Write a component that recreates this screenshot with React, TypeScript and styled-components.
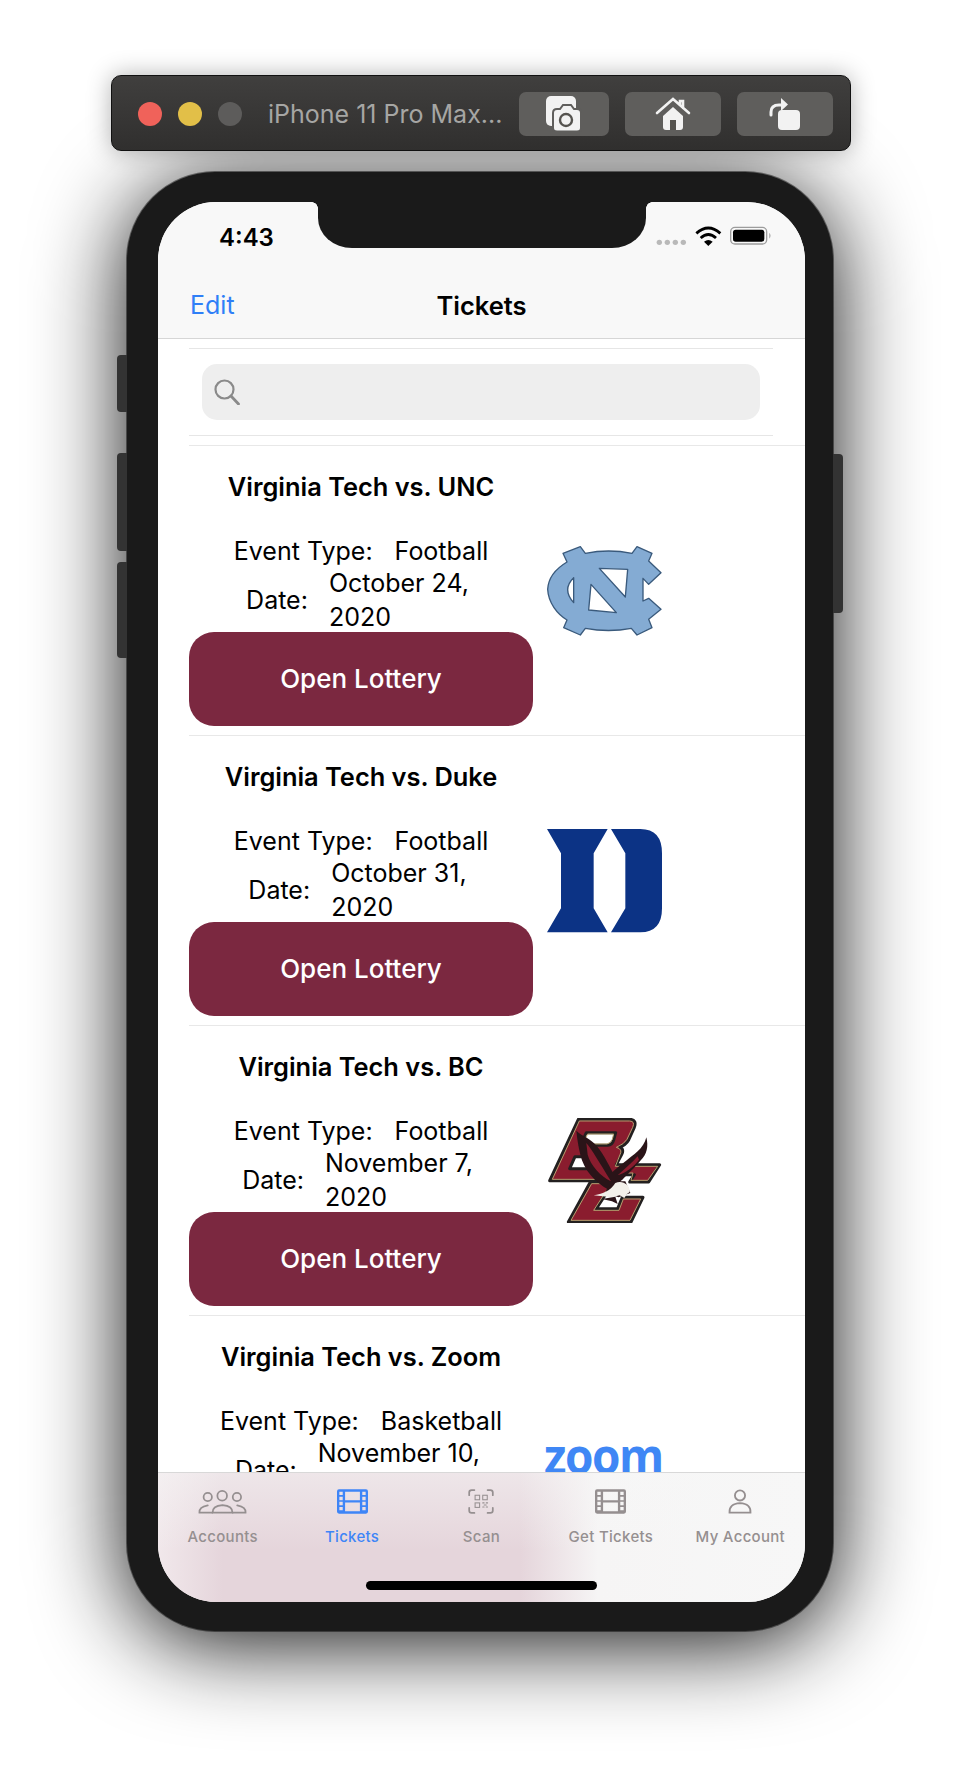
import styled, { createGlobalStyle } from "styled-components";

const GlobalStyle = createGlobalStyle`
  html, body {
    margin: 0;
    padding: 0;
    background: #fff;
    font-family: Inter, "Liberation Sans", sans-serif;
  }
`;

const events = [
  { title: "Virginia Tech vs. UNC", type: "Football", date: ["October 24,", "2020"], logo: "unc" },
  { title: "Virginia Tech vs. Duke", type: "Football", date: ["October 31,", "2020"], logo: "duke" },
  { title: "Virginia Tech vs. BC", type: "Football", date: ["November 7,", "2020"], logo: "bc" },
  { title: "Virginia Tech vs. Zoom", type: "Basketball", date: ["November 10,", "2020"], logo: "zoom" },
];

const filmPath = () => {
  let d = "M6 0H86Q92 0 92 6V66Q92 72 86 72H6Q0 72 0 66V6Q0 0 6 0Z";
  [7, 22, 37, 52].forEach((y) => {
    d += `M7 ${y}h10v10h-10zM75 ${y}h10v10h-10z`;
  });
  d += "M24 7h44v25h-44zM24 39h44v26h-44z";
  return d;
};

const FilmIcon = () => (
  <svg width="31" height="25" viewBox="0 0 92 72">
    <path d={filmPath()} fill="currentColor" fillRule="evenodd" />
  </svg>
);

const AccountsIcon = () => (
  <svg width="51" height="25" viewBox="20 22 156 78" fill="none" stroke="currentColor" strokeWidth="5.5" strokeLinecap="round">
    <circle cx="52" cy="47" r="13" />
    <circle cx="97" cy="43" r="15" />
    <circle cx="143" cy="47" r="13" />
    <path d="M67 96H129Q130 74 98 72Q66 74 67 96Z" />
    <path d="M66 96H26Q24 78 52 73" />
    <path d="M130 96H170Q172 78 144 73" />
  </svg>
);

const ScanIcon = () => (
  <svg width="26" height="25" viewBox="26 26 74 72" fill="none" stroke="currentColor" strokeWidth="5" strokeLinecap="round">
    <path d="M29 44V36Q29 29 36 29H44M82 29H90Q97 29 97 36V44M29 80V88Q29 95 36 95H44M82 95H90Q97 95 97 88V80" />
    <g strokeWidth="3">
      <rect x="46" y="44" width="13" height="13" />
      <rect x="68" y="44" width="13" height="13" />
      <rect x="46" y="66" width="13" height="13" />
      <path d="M68 66h4M78 66h4M72 72h6M68 78h4M78 78h4" />
    </g>
  </svg>
);

const AccountIcon = () => (
  <svg width="24" height="25" viewBox="0 0 70 74" fill="none" stroke="currentColor" strokeWidth="5.5">
    <circle cx="35" cy="19" r="15" />
    <path d="M4 70H66Q68 44 35 42Q2 44 4 70Z" />
  </svg>
);

const SearchIcon = () => (
  <svg width="26" height="26" viewBox="0 0 26 26" fill="none" stroke="#8a8a8a" strokeWidth="2.2" strokeLinecap="round">
    <circle cx="10.5" cy="10.5" r="9" />
    <path d="M17 17L24.5 25" strokeWidth="2.8" />
  </svg>
);

const StatusIcons = () => (
  <svg width="130" height="35" viewBox="0 0 390 105">
    <g fill="#b9b9b9">
      <circle cx="28" cy="67" r="8" />
      <circle cx="52" cy="67" r="8" />
      <circle cx="76" cy="67" r="8" />
      <circle cx="100" cy="67" r="8" />
    </g>
    <g fill="none" stroke="#000" strokeWidth="8.5">
      <path d="M139 40Q175 8 211 40" />
      <path d="M152 54Q175 33 198 54" />
    </g>
    <path d="M162 65Q175 55 188 65L175 78Z" fill="#000" />
    <rect x="242" y="22" width="108" height="50" rx="13" fill="none" stroke="#9c9c9c" strokeWidth="4" />
    <rect x="249" y="29" width="94" height="36" rx="8" fill="#000" />
    <path d="M358 38Q365 47 358 56Z" fill="#9c9c9c" />
  </svg>
);

const CameraIcon = () => (
  <svg width="36" height="36" viewBox="0 0 36 36">
    <rect x="0" y="0" width="30" height="30" rx="5" fill="#f2f2f2" />
    <path
      d="M7 17Q7 13 11 13H14L17 9H25L28 13H31Q35 13 35 17V32Q35 35.5 31 35.5H11Q7 35.5 7 32Z"
      fill="#f2f2f2"
      stroke="#5f5e5c"
      strokeWidth="2"
    />
    <circle cx="20" cy="24" r="6" fill="none" stroke="#55534f" strokeWidth="2.4" />
  </svg>
);

const HomeIcon = () => (
  <svg width="36" height="34" viewBox="0 0 36 34">
    <path d="M2 16L18 2L34 16M25 8V4H28V11" fill="none" stroke="#f2f2f2" strokeWidth="2.6" strokeLinecap="round" />
    <path d="M8 19L18 10L28 19V30Q28 33 25 33H11Q8 33 8 30Z" fill="#f2f2f2" />
    <rect x="15" y="23" width="6" height="10" fill="#55534f" />
  </svg>
);

const RotateIcon = () => (
  <svg width="32" height="34" viewBox="0 0 32 34">
    <rect x="9" y="13" width="22" height="20" rx="4" fill="#f2f2f2" />
    <path d="M2 18V15Q2 8 10 8H13" fill="none" stroke="#f2f2f2" strokeWidth="3" strokeLinecap="round" />
    <path d="M12 1L19 7.500L12 14Z" fill="#f2f2f2" />
  </svg>
);

const UncLogo = () => (
  <svg viewBox="0 0 345 270">
    <path
      fillRule="evenodd"
      fill="#84abd3"
      stroke="#3a5a7c"
      strokeWidth="4"
      strokeLinejoin="round"
      d="M2 130C4 90 30 66 60 48L48 22L100 2L115 22Q185 8 255 22L270 2L315 22L305 45L342 80L305 115L288 97V165L305 157L342 190L305 220L315 245L270 267L253 247Q185 260 115 247L100 267L50 245L60 222C30 204 4 170 2 130ZM80 95Q44 130 80 170ZM157 67L242 70L235 153ZM132 115L208 200L125 192Z"
    />
  </svg>
);

const DukeLogo = () => (
  <svg viewBox="0 2 345 312">
    <path
      fill="#0c3385"
      d="M0 2H182L140 75V240L182 312H0L42 240V75ZM192 2H280Q345 2 345 75V240Q345 312 280 312H192L235 240V75Z"
    />
  </svg>
);

const BcLogo = () => (
  <svg viewBox="0 0 345 316">
    <g stroke="#232020" strokeWidth="9" strokeLinejoin="round">
      <path
        fill="#8a1c2e"
        d="M94 4H250Q270 6 262 28L245 66Q236 82 218 86Q232 94 224 110L208 140H338L305 192H248L262 170H200L190 188H8ZM118 44L100 82H182Q196 80 200 66L206 44ZM84 116L68 152H140L160 116Z"
        fillRule="evenodd"
      />
      <path fill="#8a1c2e" d="M130 192H200L148 272H212L226 238H288L252 312H64Z" />
    </g>
    <g stroke="#b5a06f" strokeWidth="3" fill="none" strokeLinejoin="round">
      <path d="M97 9H248Q265 10 257 28L240 64Q232 78 208 88Q228 94 219 110L205 145H332L302 187H252L258 165H197L187 184H16Z" />
      <path d="M122 48L106 78H180Q190 76 196 64L200 48ZM134 197H192L140 277H216L229 243H281L249 307H72Z" />
    </g>
    <path
      fill="#2a1418"
      d="M88 38C105 55 130 60 150 85C172 112 190 150 205 178L212 200L186 215C145 195 110 155 100 110C94 85 90 60 88 38ZM298 58C305 85 300 110 280 128C262 150 240 170 226 185L200 205L185 175C205 150 250 120 272 100C285 88 294 75 298 58ZM186 190H235L250 225L215 238L175 225Z"
    />
    <path
      fill="#8a1c2e"
      d="M118 75C135 95 155 130 192 190C160 175 130 140 122 110ZM272 115C255 135 235 150 212 172C235 165 262 145 276 125Z"
    />
    <path fill="#f3f0ea" d="M205 195C225 185 250 200 248 222L240 228L232 240L218 232L195 238L140 232C165 228 190 220 205 195Z" />
    <path fill="#2a1418" d="M165 243L205 236L212 258L195 250Z" />
  </svg>
);

const renderLogo = (logo: string) => {
  if (logo === "unc") return <UncLogo />;
  if (logo === "duke") return <DukeLogo />;
  if (logo === "bc") return <BcLogo />;
  return <ZoomMark>zoom</ZoomMark>;
};

export default function App() {
  return (
    <Page>
      <GlobalStyle />
      <Toolbar>
        <Light $color="#f0625a" />
        <Light $color="#e2bf48" />
        <Light $color="#5d5c5b" />
        <DeviceName>iPhone 11 Pro Max...</DeviceName>
        <ToolButtons>
          <ToolButton $width={90}>
            <CameraIcon />
          </ToolButton>
          <ToolButton $width={96}>
            <HomeIcon />
          </ToolButton>
          <ToolButton $width={96}>
            <RotateIcon />
          </ToolButton>
        </ToolButtons>
      </Toolbar>
      <Phone>
        <SideButton $side="left" $top={183} $height={57} />
        <SideButton $side="left" $top={281} $height={98} />
        <SideButton $side="left" $top={390} $height={96} />
        <SideButton $side="right" $top={282} $height={159} />
        <Screen>
          <Notch />
          <StatusBar>
            <Clock>4:43</Clock>
            <StatusIcons />
          </StatusBar>
          <NavBar>
            <EditLink>Edit</EditLink>
            <NavTitle>Tickets</NavTitle>
          </NavBar>
          <List>
            <SearchSection>
              <SearchField>
                <SearchIcon />
              </SearchField>
            </SearchSection>
            {events.map((ev) => (
              <EventRow key={ev.title}>
                <EventInfo>
                  <EventTitle>{ev.title}</EventTitle>
                  <TypeLine>
                    <span>Event Type:</span>
                    <span>{ev.type}</span>
                  </TypeLine>
                  <DateLine>
                    <span>Date:</span>
                    <DateValue>
                      {ev.date.map((line) => (
                        <div key={line}>{line}</div>
                      ))}
                    </DateValue>
                  </DateLine>
                  <LotteryButton>Open Lottery</LotteryButton>
                </EventInfo>
                <LogoSlot>{renderLogo(ev.logo)}</LogoSlot>
              </EventRow>
            ))}
          </List>
          <TabBar>
            <Tabs>
              <Tab>
                <TabIcon><AccountsIcon /></TabIcon>
                Accounts
              </Tab>
              <Tab $active>
                <TabIcon><FilmIcon /></TabIcon>
                Tickets
              </Tab>
              <Tab>
                <TabIcon><ScanIcon /></TabIcon>
                Scan
              </Tab>
              <Tab>
                <TabIcon><FilmIcon /></TabIcon>
                Get Tickets
              </Tab>
              <Tab>
                <TabIcon><AccountIcon /></TabIcon>
                My Account
              </Tab>
            </Tabs>
            <HomeIndicator />
          </TabBar>
        </Screen>
      </Phone>
    </Page>
  );
}

const Page = styled.div`
  width: 962px;
  height: 1780px;
  overflow: hidden;
  padding-top: 75px;
  box-sizing: border-box;
  display: flex;
  flex-direction: column;
  align-items: center;
  gap: 21px;
`;

const Toolbar = styled.div`
  position: relative;
  z-index: 1;
  width: 740px;
  height: 76px;
  box-sizing: border-box;
  padding: 2px 17px 0 26px;
  display: flex;
  align-items: center;
  gap: 16px;
  background: linear-gradient(#403f3e, #302f2e);
  border: 1px solid #111;
  border-radius: 10px;
  box-shadow: 0 0 24px rgba(0, 0, 0, 0.3);
`;

const Light = styled.div<{ $color: string }>`
  width: 24px;
  height: 24px;
  border-radius: 50%;
  background: ${(p) => p.$color};
`;

const DeviceName = styled.div`
  margin-left: 10px;
  font-size: 25px;
  color: #a6a6a4;
  white-space: nowrap;
`;

const ToolButtons = styled.div`
  margin-left: auto;
  display: flex;
  gap: 16px;
`;

const ToolButton = styled.div<{ $width: number }>`
  width: ${(p) => p.$width}px;
  height: 44px;
  display: flex;
  align-items: center;
  justify-content: center;
  background: #5f5e5c;
  border-radius: 7px;
`;

const Phone = styled.div`
  position: relative;
  width: 706px;
  height: 1459px;
  margin-right: 2px;
  box-sizing: border-box;
  padding: 30px 28px 29px 31px;
  background: #1a1a1a;
  border-radius: 88px;
  box-shadow: 0 12px 90px rgba(0, 0, 0, 0.95), 0 0 0 1px rgba(90, 90, 90, 0.7);
`;

const SideButton = styled.div<{ $side: "left" | "right"; $top: number; $height: number }>`
  position: absolute;
  ${(p) => p.$side}: -10px;
  top: ${(p) => p.$top}px;
  width: 10px;
  height: ${(p) => p.$height}px;
  background: #333;
  border-radius: ${(p) => (p.$side === "left" ? "4px 0 0 4px" : "0 4px 4px 0")};
`;

const Screen = styled.div`
  position: relative;
  height: 1400px;
  display: flex;
  flex-direction: column;
  overflow: hidden;
  background: #fff;
  border-radius: 58px;
`;

const Notch = styled.div`
  position: absolute;
  top: 0;
  left: 160px;
  width: 328px;
  height: 46px;
  background: #1a1a1a;
  border-radius: 0 0 34px 34px / 0 0 30px 30px;
  z-index: 2;
  &::before,
  &::after {
    content: "";
    position: absolute;
    top: 0;
    width: 6px;
    height: 6px;
  }
  &::before {
    left: -6px;
    background: radial-gradient(circle at 0 100%, transparent 5.5px, #1a1a1a 6px);
  }
  &::after {
    right: -6px;
    background: radial-gradient(circle at 100% 100%, transparent 5.5px, #1a1a1a 6px);
  }
`;

const StatusBar = styled.div`
  height: 70px;
  flex: none;
  box-sizing: border-box;
  padding: 0 25px 0 61px;
  display: flex;
  align-items: center;
  justify-content: space-between;
  background: #f8f8f8;
`;

const Clock = styled.div`
  font-size: 24px;
  font-weight: 600;
  color: #000;
`;

const NavBar = styled.div`
  position: relative;
  height: 67px;
  flex: none;
  box-sizing: border-box;
  display: flex;
  align-items: center;
  justify-content: center;
  background: #f8f8f8;
  border-bottom: 1px solid #d6d6d6;
`;

const EditLink = styled.div`
  position: absolute;
  left: 32px;
  font-size: 25px;
  color: #2f7ff7;
`;

const NavTitle = styled.div`
  font-size: 25.5px;
  font-weight: 600;
  color: #000;
`;

const List = styled.div`
  flex: 1;
  min-height: 0;
  overflow: hidden;
  padding-top: 9px;
`;

const SearchSection = styled.div`
  margin: 0 32px 9px 31px;
  padding: 15px 13px;
  border-top: 1px solid #e6e6e6;
  border-bottom: 1px solid #e6e6e6;
`;

const SearchField = styled.div`
  height: 56px;
  box-sizing: border-box;
  padding-left: 12px;
  display: flex;
  align-items: center;
  background: #eeeeee;
  border-radius: 15px;
`;

const EventRow = styled.div`
  margin-left: 31px;
  height: 290px;
  box-sizing: border-box;
  display: flex;
  align-items: center;
  gap: 14px;
  border-top: 1px solid #e8e8e8;
`;

const EventInfo = styled.div`
  width: 344px;
  padding: 20px 0 9px;
  display: flex;
  flex-direction: column;
  align-items: center;
  font-size: 25px;
  line-height: 34px;
  color: #000;
`;

const EventTitle = styled.div`
  margin: 0 0 28px;
  padding-top: 2px;
  font-size: 25.4px;
  line-height: 38px;
  font-weight: 600;
`;

const TypeLine = styled.div`
  display: flex;
  gap: 22px;
  white-space: nowrap;
`;

const DateLine = styled.div`
  margin: -2px 7px 0 0;
  display: flex;
  align-items: center;
  gap: 21px;
  white-space: nowrap;
`;

const DateValue = styled.div`
  display: flex;
  flex-direction: column;
`;

const LotteryButton = styled.div`
  margin-top: -2px;
  width: 100%;
  height: 94px;
  display: flex;
  align-items: center;
  justify-content: center;
  background: #7b2840;
  border-radius: 25px;
  color: #fff;
  font-size: 26px;
  font-weight: 500;
`;

const LogoSlot = styled.div`
  width: 115px;
  svg {
    display: block;
    width: 100%;
  }
`;

const ZoomMark = styled.div`
  font-family: "Open Sans", sans-serif;
  font-size: 46px;
  line-height: 30px;
  font-weight: 700;
  letter-spacing: -1.5px;
  color: #3f87f5;
  text-align: center;
  transform: translate(-3px, -6px) scaleY(1.06);
`;

const TabBar = styled.div`
  position: relative;
  z-index: 1;
  height: 130px;
  flex: none;
  box-sizing: border-box;
  display: flex;
  flex-direction: column;
  align-items: center;
  border-top: 1px solid #d8d8d8;
  background:
    linear-gradient(rgba(247, 247, 247, 0.5), rgba(247, 247, 247, 0) 60%),
    linear-gradient(90deg, #f1e8eb 0, #e5d5db 10%, #e5d5db 56%, #f6f5f5 68%, #f7f7f7 100%);
`;

const Tabs = styled.div`
  width: 100%;
  padding-top: 15px;
  display: grid;
  grid-template-columns: repeat(5, 1fr);
`;

const Tab = styled.div<{ $active?: boolean }>`
  display: flex;
  flex-direction: column;
  align-items: center;
  gap: 13px;
  font-size: 15px;
  line-height: 20px;
  font-weight: 500;
  letter-spacing: 0.3px;
  color: ${(p) => (p.$active ? "#3e85f7" : "#958f90")};
`;

const TabIcon = styled.div`
  height: 26px;
  display: flex;
  align-items: center;
`;

const HomeIndicator = styled.div`
  margin-top: 34px;
  width: 231px;
  height: 9px;
  background: #000;
  border-radius: 5px;
`;
